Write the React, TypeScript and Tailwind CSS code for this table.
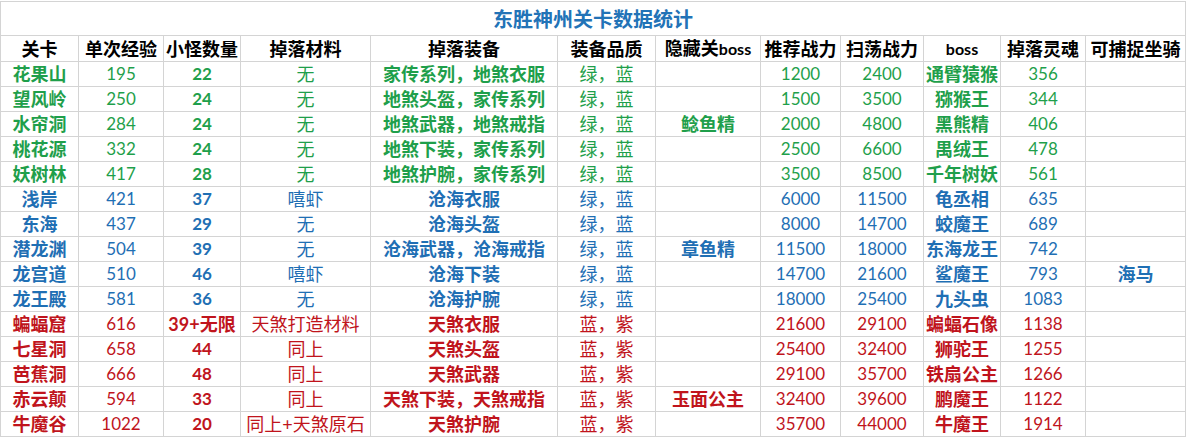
import React from "react";

type Row = string[];

const rows: Row[] = [
  ["花果山", "195", "22", "无", "家传系列，地煞衣服", "绿，蓝", "", "1200", "2400", "通臂猿猴", "356", ""],
  ["望风岭", "250", "24", "无", "地煞头盔，家传系列", "绿，蓝", "", "1500", "3500", "猕猴王", "344", ""],
  ["水帘洞", "284", "24", "无", "地煞武器，地煞戒指", "绿，蓝", "鲶鱼精", "2000", "4800", "黑熊精", "406", ""],
  ["桃花源", "332", "24", "无", "地煞下装，家传系列", "绿，蓝", "", "2500", "6600", "禺绒王", "478", ""],
  ["妖树林", "417", "28", "无", "地煞护腕，家传系列", "绿，蓝", "", "3500", "8500", "千年树妖", "561", ""],
  ["浅岸", "421", "37", "嘻虾", "沧海衣服", "绿，蓝", "", "6000", "11500", "龟丞相", "635", ""],
  ["东海", "437", "29", "无", "沧海头盔", "绿，蓝", "", "8000", "14700", "蛟魔王", "689", ""],
  ["潜龙渊", "504", "39", "无", "沧海武器，沧海戒指", "绿，蓝", "章鱼精", "11500", "18000", "东海龙王", "742", ""],
  ["龙宫道", "510", "46", "嘻虾", "沧海下装", "绿，蓝", "", "14700", "21600", "鲨魔王", "793", "海马"],
  ["龙王殿", "581", "36", "无", "沧海护腕", "绿，蓝", "", "18000", "25400", "九头虫", "1083", ""],
  ["蝙蝠窟", "616", "39+无限", "天煞打造材料", "天煞衣服", "蓝，紫", "", "21600", "29100", "蝙蝠石像", "1138", ""],
  ["七星洞", "658", "44", "同上", "天煞头盔", "蓝，紫", "", "25400", "32400", "狮驼王", "1255", ""],
  ["芭蕉洞", "666", "48", "同上", "天煞武器", "蓝，紫", "", "29100", "35700", "铁扇公主", "1266", ""],
  ["赤云颠", "594", "33", "同上", "天煞下装，天煞戒指", "蓝，紫", "玉面公主", "32400", "39600", "鹏魔王", "1122", ""],
  ["牛魔谷", "1022", "20", "同上+天煞原石", "天煞护腕", "蓝，紫", "", "35700", "44000", "牛魔王", "1914", ""],
];

const headers = ["关卡", "单次经验", "小怪数量", "掉落材料", "掉落装备", "装备品质", "隐藏关boss", "推荐战力", "扫荡战力", "boss", "掉落灵魂", "可捕捉坐骑"];
const widths = [78, 85, 77, 130, 187, 98, 105, 80, 83, 77, 85, 100];
const bold = [true, false, true, false, true, false, true, false, false, true, false, true];

function colorFor(i: number) {
  if (i < 5) return "text-[#1f9f4b]";
  if (i < 10) return "text-[#1f6fb4]";
  return "text-[#c0141c]";
}

export default function App() {
  return (
    <div className="w-[1187px] h-[437px] bg-white pt-px overflow-hidden" style={{ fontFamily: 'Lato, "Noto Sans CJK SC", sans-serif' }}>
      <table className="table-fixed border-collapse w-[1185px]">
        <colgroup>
          {widths.map((w, i) => (
            <col key={i} style={{ width: w }} />
          ))}
        </colgroup>
        <tbody>
          <tr className="h-[34px]">
            <td colSpan={12} className="border border-[#d4d4d4] text-center align-middle p-0 text-[20px] font-bold text-[#2273b7] leading-[24px]">
              东胜神州关卡数据统计
            </td>
          </tr>
          <tr className="h-[26px]">
            {headers.map((h, i) => (
              <td key={i} className="border border-[#d4d4d4] text-center align-middle p-0 text-[18px] font-bold text-black leading-[22px] whitespace-nowrap">
                {h.includes("boss") ? (
                  <>
                    {h.replace("boss", "")}
                    <span className="text-[16px]">boss</span>
                  </>
                ) : (
                  h
                )}
              </td>
            ))}
          </tr>
          {rows.map((r, ri) => (
            <tr key={ri} className="h-[25px]">
              {r.map((c, ci) => (
                <td
                  key={ci}
                  className={`border border-[#d4d4d4] text-center align-middle p-0 leading-[22px] whitespace-nowrap ${colorFor(ri)} ${bold[ci] ? "font-bold" : "font-normal"} ${/^[0-9]+$/.test(c) ? "text-[17px]" : "text-[18px]"}`}
                >
                  {c}
                </td>
              ))}
            </tr>
          ))}
        </tbody>
      </table>
    </div>
  );
}
